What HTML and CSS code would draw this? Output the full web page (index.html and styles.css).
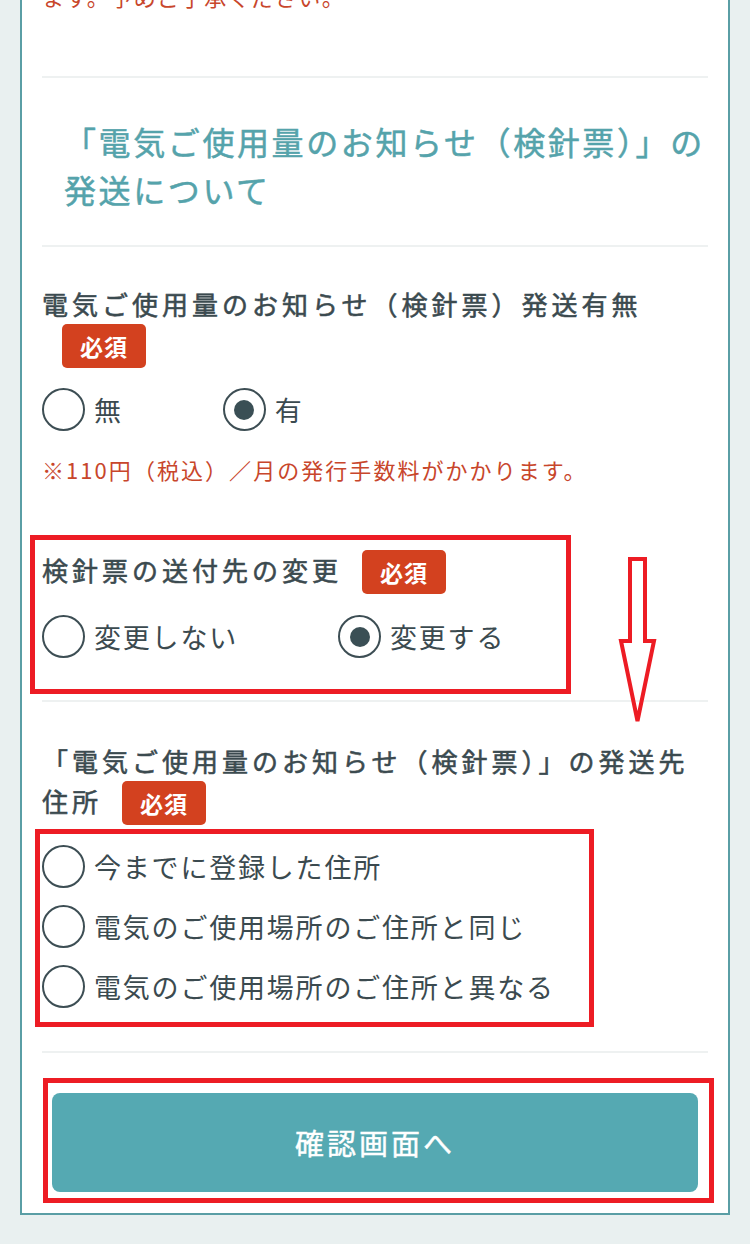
FILE: index.html
```html
<!DOCTYPE html>
<html lang="ja">
<head>
<meta charset="utf-8">
<title>検針票の発送について</title>
<link rel="stylesheet" href="styles.css">
</head>
<body>
<div class="page">
  <div class="card">
    <section class="sec sec-top">
      <p class="warn">ます。予めご了承ください。</p>
    </section>

    <section class="sec sec-heading">
      <h2 class="heading">「電気ご使用量のお知らせ（検針票）」の発送について</h2>
    </section>

    <section class="sec sec-form1">
      <div class="field">
        <div class="label">電気ご使用量のお知らせ（検針票）発送有無<span class="badge">必須</span></div>
        <div class="radios inline">
          <label class="opt"><span class="radio"></span><span class="opt-text">無</span></label>
          <label class="opt"><span class="radio checked"></span><span class="opt-text">有</span></label>
        </div>
        <p class="fee">※110円（税込）／月の発行手数料がかかります。</p>
      </div>
      <div class="field field2">
        <div class="label">検針票の送付先の変更<span class="badge">必須</span></div>
        <div class="radios inline">
          <label class="opt"><span class="radio"></span><span class="opt-text">変更しない</span></label>
          <label class="opt"><span class="radio checked"></span><span class="opt-text">変更する</span></label>
        </div>
      </div>
    </section>

    <section class="sec sec-form2">
      <div class="field">
        <div class="label">「電気ご使用量のお知らせ（検針票）」の発送先住所<span class="badge">必須</span></div>
        <div class="radios stack">
          <label class="opt"><span class="radio"></span><span class="opt-text">今までに登録した住所</span></label>
          <label class="opt"><span class="radio"></span><span class="opt-text">電気のご使用場所のご住所と同じ</span></label>
          <label class="opt"><span class="radio"></span><span class="opt-text">電気のご使用場所のご住所と異なる</span></label>
        </div>
      </div>
    </section>

    <section class="sec-btn">
      <button class="submit" type="button">確認画面へ</button>
    </section>
  </div>

  <div class="mark mark1"></div>
  <div class="mark mark2"></div>
  <div class="mark mark3"></div>
  <svg class="arrow" width="44" height="176" viewBox="0 0 44 176">
    <polygon points="12,2 27,2 27,84 36,84 19.5,164 3,84 12,84" fill="none" stroke="#ed1c24" stroke-width="4" stroke-linejoin="miter"/>
  </svg>
</div>
</body>
</html>
```

FILE: styles.css
```css
* { box-sizing: border-box; }

html, body {
  margin: 0;
  padding: 0;
}

body {
  background: #e9f0f0;
  font-family: "Noto Sans CJK JP", "Noto Sans", sans-serif;
  color: #3b4a4f;
  overflow: hidden;
}

.page {
  position: relative;
  display: flow-root;
  width: 750px;
  padding: 0 20px 40px;
}

.card {
  margin-top: -40px;
  background: #fff;
  border: 2px solid #5a9ea5;
  padding: 0 20px 21px;
}

.sec {
  border-bottom: 2px solid #eef1f1;
}

.sec-top {
  padding-top: 17px;
  padding-bottom: 63px;
}

.warn {
  margin: 0;
  color: #c8462b;
  font-size: 22px;
  line-height: 34px;
  letter-spacing: 1.5px;
}

.sec-heading {
  padding: 39px 0 32px 22px;
}

.heading {
  margin: 0 -14px 0 0;
  color: #55a3ab;
  font-size: 32px;
  line-height: 48px;
  font-weight: 400;
  letter-spacing: 2.6px;
  -webkit-text-stroke: 0.5px #55a3ab;
}

.sec-form1 {
  padding-top: 37px;
  padding-bottom: 42px;
}

.sec-form2 {
  padding-top: 39px;
  padding-bottom: 43px;
}

.label {
  font-size: 26px;
  line-height: 40px;
  font-weight: 400;
  letter-spacing: 4px;
  color: #3b4a4f;
  -webkit-text-stroke: 0.55px #3b4a4f;
}

.badge {
  display: inline-block;
  vertical-align: middle;
  margin-left: 20px;
  width: 84px;
  height: 44px;
  line-height: 44px;
  border-radius: 5px;
  background: #d3411f;
  color: #fff;
  font-size: 23px;
  font-weight: 700;
  letter-spacing: 1px;
  text-align: center;
  -webkit-text-stroke: 0;
  position: relative;
  top: -2px;
}

.radios.inline {
  display: flex;
  margin-top: 19px;
}

.radios.inline .opt {
  margin-right: 100px;
}

.radios.stack {
  display: flex;
  flex-direction: column;
  gap: 18px;
  margin-top: 19px;
}

.opt {
  display: flex;
  align-items: center;
  height: 42px;
}

.radio {
  flex: none;
  width: 43px;
  height: 43px;
  border: 2px solid #3d4e54;
  border-radius: 50%;
  display: flex;
  align-items: center;
  justify-content: center;
  margin-right: 9px;
}

.radio.checked::after {
  content: "";
  width: 20px;
  height: 20px;
  border-radius: 50%;
  background: #3a4f55;
}

.opt-text {
  font-size: 27px;
  line-height: 42px;
  letter-spacing: 1.8px;
  color: #3b4a4f;
}

.fee {
  margin: 21px 0 0;
  color: #c8462b;
  font-size: 22px;
  line-height: 34px;
  letter-spacing: 2.05px;
}

.field2 {
  margin-top: 64px;
}

.field2 .radios.inline {
  margin-top: 20px;
}

.sec-btn {
  padding: 40px 10px 0;
}

.submit {
  display: block;
  width: 100%;
  height: 99px;
  border: none;
  border-radius: 8px;
  background: #55a9b2;
  color: #fff;
  font-family: inherit;
  font-size: 29px;
  font-weight: 400;
  letter-spacing: 3px;
  -webkit-text-stroke: 0.45px #fff;
}

.mark {
  position: absolute;
  border: 5px solid #ed1c24;
}

.mark1 { left: 30px; top: 535px; width: 541px; height: 159px; }
.mark2 { left: 35px; top: 829px; width: 559px; height: 198px; }
.mark3 { left: 43px; top: 1078px; width: 671px; height: 125px; }

.arrow {
  position: absolute;
  left: 618px;
  top: 557px;
}
```
